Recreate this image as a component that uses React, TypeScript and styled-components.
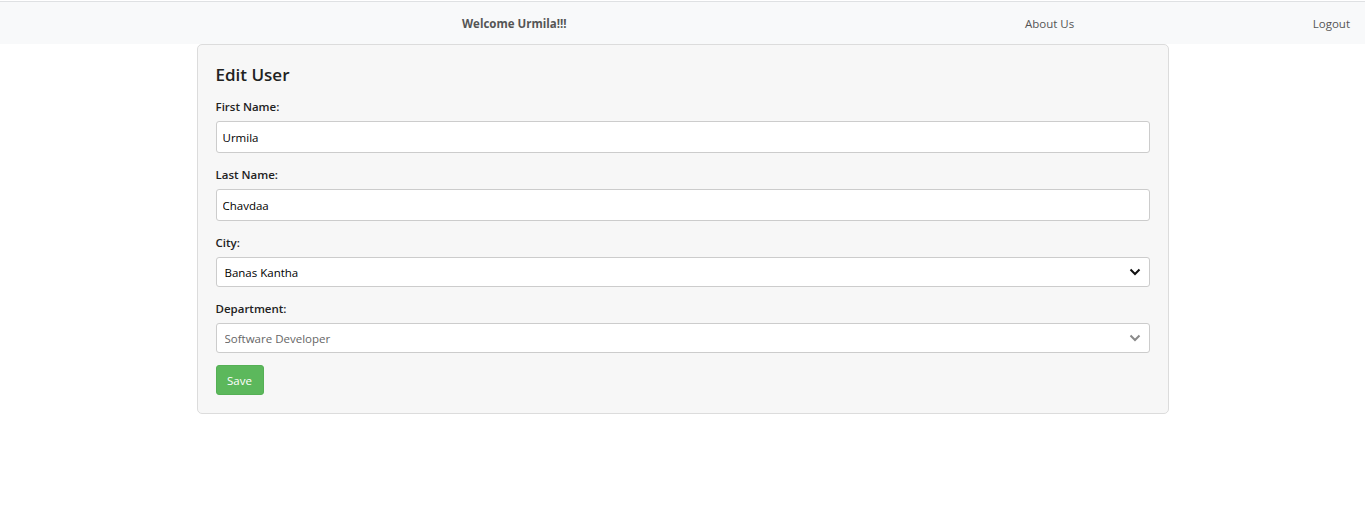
import React from "react";
import styled, { createGlobalStyle } from "styled-components";

const GlobalStyle = createGlobalStyle`
  body {
    margin: 0;
    background: #fff;
    font-family: "Open Sans", "Noto Sans", sans-serif;
    color: #212529;
  }
`;

const chevron = (color: string) =>
  `url("data:image/svg+xml,%3Csvg xmlns='http://www.w3.org/2000/svg' width='12' height='8' viewBox='0 0 12 8'%3E%3Cpath d='M1.5 1.5 6 6l4.5-4.5' fill='none' stroke='${encodeURIComponent(
    color
  )}' stroke-width='2'/%3E%3C/svg%3E")`;

const Navbar = styled.nav`
  display: grid;
  grid-template-columns: 462px 563px 1fr auto;
  align-items: center;
  height: 42px;
  border-top: 1px solid #dfe1e3;
  margin-top: 1px;
  background: #f8f9fa;
  font-size: 11.5px;
  color: #555;
`;

const NavItem = styled.a<{ $col: number; $bold?: boolean }>`
  grid-column: ${(p) => p.$col};
  font-weight: ${(p) => (p.$bold ? 700 : 400)};
  padding-right: ${(p) => (p.$col === 4 ? "15px" : "0")};
  color: #555;
  text-decoration: none;
`;

const Card = styled.div`
  width: 934px;
  margin: 0 auto;
  padding: 18px;
  background: #f7f7f7;
  border: 1px solid #dcdcdc;
  border-radius: 5px;
`;

const Title = styled.h2`
  margin: 0 0 13px;
  font-size: 17px;
  font-weight: 600;
  color: #222;
`;

const Field = styled.div`
  display: flex;
  flex-direction: column;
  margin-bottom: 14px;

  &:last-of-type {
    margin-bottom: 12px;
  }
`;

const Label = styled.label`
  font-size: 11.5px;
  font-weight: 600;
  color: #222;
  margin-bottom: 7px;
`;

const TextInput = styled.input`
  box-sizing: border-box;
  height: 32px;
  padding: 0 6px;
  font-family: inherit;
  font-size: 11.5px;
  color: #000;
  background: #fff;
  border: 1px solid #ccc;
  border-radius: 3px;
  outline: none;
`;

const Select = styled.select<{ $muted?: boolean }>`
  box-sizing: border-box;
  height: 30px;
  padding: 0 8px;
  font-family: inherit;
  font-size: 11.5px;
  color: ${(p) => (p.$muted ? "#666" : "#000")};
  appearance: none;
  background: #fff ${(p) => chevron(p.$muted ? "#8a8a8a" : "#111")} no-repeat right 8px center;
  border: 1px solid #ccc;
  border-radius: 3px;
  outline: none;
`;

const SaveButton = styled.button`
  width: 48px;
  height: 30px;
  padding: 0;
  font-family: inherit;
  font-size: 11.5px;
  color: #fff;
  background: #5cb85c;
  border: 1px solid #55b055;
  border-radius: 3px;
  cursor: pointer;
`;

export default function App() {
  return (
    <>
      <GlobalStyle />
      <Navbar>
        <NavItem $col={2} $bold>
          Welcome Urmila!!!
        </NavItem>
        <NavItem $col={3} href="#">
          About Us
        </NavItem>
        <NavItem $col={4} href="#">
          Logout
        </NavItem>
      </Navbar>
      <Card>
        <Title>Edit User</Title>
        <Field>
          <Label>First Name:</Label>
          <TextInput defaultValue="Urmila" />
        </Field>
        <Field>
          <Label>Last Name:</Label>
          <TextInput defaultValue="Chavdaa" />
        </Field>
        <Field>
          <Label>City:</Label>
          <Select defaultValue="Banas Kantha">
            <option>Banas Kantha</option>
          </Select>
        </Field>
        <Field>
          <Label>Department:</Label>
          <Select $muted defaultValue="Software Developer">
            <option>Software Developer</option>
          </Select>
        </Field>
        <SaveButton>Save</SaveButton>
      </Card>
    </>
  );
}
